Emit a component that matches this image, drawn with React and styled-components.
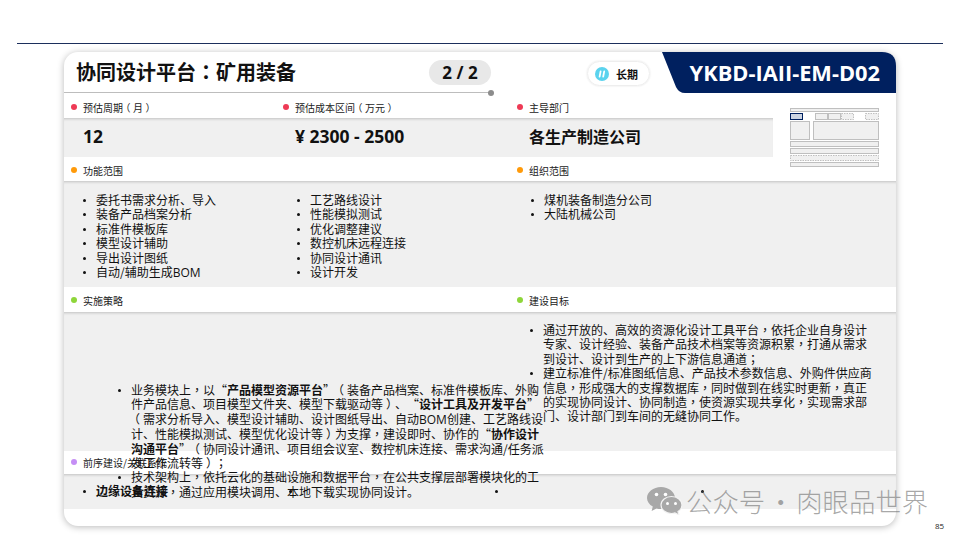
import React from 'react';
import styled, { createGlobalStyle } from 'styled-components';

const GlobalStyle = createGlobalStyle`
    html, body {
        margin: 0;
        background: #fff;
    }
    body {
        width: 960px;
        height: 540px;
        overflow: hidden;
        font-family: "Noto Sans CJK SC", sans-serif;
        text-spacing-trim: space-all;
        color: #111;
    }
`;

const cjk = '"Noto Sans CJK SC", sans-serif';
const latin = '"Open Sans", "Noto Sans CJK SC", sans-serif';

const Page = styled.div`
    position: relative;
    width: 960px;
    height: 540px;
    padding-top: 43px;
    box-sizing: border-box;
`;

const Rule = styled.div`
    height: 1px;
    margin: 0 17px;
    background: #1c2f5c;
`;

const Card = styled.div`
    width: 832px;
    height: 474px;
    margin: 8px 0 0 64px;
    background: #fff;
    border-radius: 14px;
    box-shadow: 0 1px 7px rgba(0, 0, 0, .28);
`;

const Header = styled.div`
    display: flex;
    align-items: flex-start;
    height: 41px;
`;

const TitleBar = styled.div`
    position: relative;
    display: flex;
    align-items: center;
    justify-content: space-between;
    width: 427px;
    height: 41px;
    padding-left: 12px;
    box-sizing: border-box;
    border-bottom: 1px solid #bdbdbd;
    &::after {
        content: "";
        position: absolute;
        right: -3px;
        bottom: -3.5px;
        width: 6px;
        height: 6px;
        border-radius: 50%;
        background: #8c8c8c;
    }
`;

const Title = styled.h1`
    margin: 0;
    font-family: ${cjk};
    font-size: 20px;
    font-weight: 700;
    line-height: 40px;
    color: #111;
`;

const PagePill = styled.div`
    width: 62px;
    height: 25px;
    border-radius: 13px;
    background: #e8e8e8;
    font-family: ${latin};
    font-size: 17px;
    font-weight: 700;
    line-height: 25px;
    text-align: center;
`;

const TermBadge = styled.div`
    display: flex;
    align-items: center;
    gap: 7px;
    width: 63px;
    height: 25px;
    margin: 9px 0 0 96px;
    padding-left: 7px;
    box-sizing: border-box;
    border: 1px solid #eee;
    border-radius: 13px;
    box-shadow: 0 0 2px rgba(0, 0, 0, .12);
    font-size: 11px;
    font-weight: 700;
`;

const CodeTag = styled.div`
    width: 234px;
    height: 41px;
    margin-left: auto;
    padding-right: 16px;
    box-sizing: border-box;
    background: #00205f;
    clip-path: path("M0 0 H220 Q234 0 234 14 V41 H23 Q17 41 14 35 Z");
    color: #fff;
    font-family: ${latin};
    font-size: 21.8px;
    font-weight: 700;
    line-height: 41px;
    text-align: right;
    white-space: nowrap;
`;

const TopBlock = styled.div`
    display: flex;
    height: 64px;
`;

const TopFields = styled.div`
    width: 709px;
`;

const Thumb = styled.svg`
    display: block;
    flex: none;
    width: 90px;
    height: 60px;
    margin: 15px 0 0 17px;
`;

const LabelRow = styled.div`
    display: grid;
    grid-template-columns: ${p => p.$cols || '212px 234px 1fr'};
    height: ${p => p.$h}px;
    padding-top: ${p => p.$pad}px;
    box-sizing: border-box;
    align-items: center;
`;

const Label = styled.div`
    display: flex;
    align-items: center;
    gap: 6px;
    padding-left: 7px;
    font-size: 10px;
    line-height: 14px;
    color: #222;
    white-space: nowrap;
    &::before {
        content: "";
        flex: none;
        width: 6px;
        height: 6px;
        margin-top: -2px;
        border-radius: 50%;
        background: ${p => p.$dot};
    }
`;

const ValueRow = styled.div`
    display: grid;
    grid-template-columns: 212px 234px 1fr;
    align-items: center;
    height: 39px;
    padding-bottom: 3px;
    box-sizing: border-box;
    background: #f0f0f0;
    box-shadow: inset 0 3px 3px -2px rgba(0, 0, 0, .2);
`;

const Value = styled.div`
    padding-left: 19px;
    font-family: ${p => p.$cn ? cjk : latin};
    font-size: ${p => p.$cn ? 16 : 17.5}px;
    font-weight: 700;
`;

const GrayBlock = styled.div`
    display: grid;
    grid-template-columns: ${p => p.$cols};
    height: ${p => p.$h}px;
    background: #f0f0f0;
    box-shadow: inset 0 3px 3px -2px rgba(0, 0, 0, .2);
`;

const List = styled.ul`
    width: ${p => p.$w ? `${p.$w}px` : 'auto'};
    margin: ${p => p.$top}px 0 0 ${p => p.$left}px;
    padding: 0;
    list-style: none;
    font-size: 12px;
    line-height: 14.4px;
    color: #111;
`;

const Item = styled.li`
    position: relative;
    &::before {
        content: "";
        position: absolute;
        left: -13px;
        top: 6px;
        width: 3px;
        height: 3px;
        border-radius: 50%;
        background: #111;
    }
`;

const Latin = styled.span`
    font-family: ${latin};
`;

// the reference centres these marks in their cell, as the TC cut does
const Mark = styled.span`
    font-family: "Noto Sans CJK TC", sans-serif;
`;

// full width brackets sit mid cell in the reference
const Bracket = styled.span`
    display: inline-block;
    transform: translateX(${p => p.$open ? '-.25em' : '.25em'});
`;

const Watermark = styled.div`
    position: absolute;
    left: 647px;
    top: 486px;
    display: flex;
    align-items: center;
    gap: 4px;
    color: rgba(110, 110, 110, .6);
    font-size: 26.4px;
    font-weight: 300;
    line-height: 30px;
    word-spacing: -3.5px;
    white-space: nowrap;
`;

const PageNo = styled.div`
    position: absolute;
    left: 935px;
    top: 520px;
    font-family: ${latin};
    font-size: 8px;
    line-height: 12px;
    color: #222;
`;

const zh = text => text.split(/([，：；（）])/).map((part, i) => {
    if (i % 2 === 0) return part;
    if (part === '（' || part === '）') return <Bracket key={i} $open={part === '（'}>{part}</Bracket>;
    return <Mark key={i}>{part}</Mark>;
});

const features = [
    ['委托书需求分析、导入', '装备产品档案分析', '标准件模板库', '模型设计辅助', '导出设计图纸', <>自动/辅助生成<Latin>BOM</Latin></>],
    ['工艺路线设计', '性能模拟测试', '优化调整建议', '数控机床远程连接', '协同设计通讯', '设计开发'],
    ['煤机装备制造分公司', '大陆机械公司'],
];

const ThumbDrawing = () => (
    <Thumb viewBox="0 0 90 60">
        <g fill="#f0f0f0" stroke="#bfbfbf" strokeWidth="1">
            <rect x="0.5" y="0.5" width="88" height="3" />
            <rect x="25.5" y="5.5" width="12" height="6" />
            <rect x="38.5" y="5.5" width="12" height="6" />
            <rect x="0.5" y="13.5" width="19" height="18" />
            <rect x="23.5" y="13.5" width="65" height="18" />
            <rect x="0.5" y="33.5" width="88" height="5" />
            <rect x="0.5" y="40.5" width="88" height="5" />
            <rect x="0.5" y="54.5" width="88" height="4" />
            <g strokeDasharray="1.5 1">
                <rect x="51.5" y="5.5" width="12" height="6" />
                <rect x="75.5" y="5.5" width="13" height="6" />
                <rect x="0.5" y="47.5" width="88" height="5" />
            </g>
        </g>
        <rect x="0.5" y="5.5" width="12" height="6" fill="#ccd4e2" stroke="#00205f" />
    </Thumb>
);

const TermIcon = () => (
    <svg width="14" height="14" viewBox="0 0 14 14">
        <circle cx="7" cy="7" r="7" fill="#5bd3ee" />
        <path d="M5.6 4.4 L4.6 9.6 M9.2 4.4 L8.2 9.6" stroke="#fff" strokeWidth="1.8" strokeLinecap="round" />
    </svg>
);

const WechatIcon = () => (
    <svg width="35" height="28" viewBox="0 0 35 28">
        <path d="M14 0 C21.7 0 28 5 28 11 C28 17 21.7 22 14 22 C12.4 22 10.9 21.8 9.5 21.4 L4.6 24 L5.8 19.6 C2.2 17.6 0 14.5 0 11 C0 5 6.3 0 14 0 Z" fill="#a8a8a8" />
        <circle cx="9.5" cy="7.5" r="1.8" fill="#fff" />
        <circle cx="18.5" cy="7.5" r="1.8" fill="#fff" />
        <path d="M24.5 9.5 C30.3 9.5 35 13.3 35 18 C35 20.7 33.4 23 31 24.6 L32 28 L28 25.9 C26.9 26.3 25.7 26.5 24.5 26.5 C18.7 26.5 14 22.7 14 18 C14 13.3 18.7 9.5 24.5 9.5 Z" fill="#a8a8a8" stroke="#f4f4f4" strokeWidth="1.2" />
        <circle cx="20.5" cy="16.5" r="1.5" fill="#fff" />
        <circle cx="28.5" cy="16.5" r="1.5" fill="#fff" />
    </svg>
);

const App = () => (
    <Page>
        <GlobalStyle />
        <Rule />
        <Card>
            <Header>
                <TitleBar>
                    <Title>{zh('协同设计平台：矿用装备')}</Title>
                    <PagePill>2 / 2</PagePill>
                </TitleBar>
                <TermBadge><TermIcon />长期</TermBadge>
                <CodeTag>YKBD-IAII-EM-D02</CodeTag>
            </Header>

            <TopBlock>
                <TopFields>
                    <LabelRow $h={25} $pad={4}>
                        <Label $dot="#ee3a55"><span>{zh('预估周期（月）')}</span></Label>
                        <Label $dot="#ee3a55"><span>{zh('预估成本区间（万元）')}</span></Label>
                        <Label $dot="#ee3a55">主导部门</Label>
                    </LabelRow>
                    <ValueRow>
                        <Value>12</Value>
                        <Value>¥ 2300 - 2500</Value>
                        <Value $cn>各生产制造公司</Value>
                    </ValueRow>
                </TopFields>
                <ThumbDrawing />
            </TopBlock>

            <LabelRow $h={24} $pad={4} $cols="446px 1fr">
                <Label $dot="#ff9a0a">功能范围</Label>
                <Label $dot="#ff9a0a">组织范围</Label>
            </LabelRow>
            <GrayBlock $h={106} $cols="212px 234px 1fr">
                {features.map((col, i) => (
                    <List key={i} $top={12} $left={i === 0 ? 32 : 34}>
                        {col.map((text, j) => <Item key={j}>{text}</Item>)}
                    </List>
                ))}
            </GrayBlock>

            <LabelRow $h={25} $pad={2} $cols="446px 1fr">
                <Label $dot="#8ed63a">实施策略</Label>
                <Label $dot="#8ed63a">建设目标</Label>
            </LabelRow>
            <GrayBlock $h={139} $cols="446px 1fr">
                <List $w={430} $top={71} $left={67}>
                    <Item>
                        {zh('业务模块上，以“')}<b>产品模型资源平台</b>{zh('”（装备产品档案、标准件模板库、外购')}<br />
                        {zh('件产品信息、项目模型文件夹、模型下载驱动等）、“')}<b>设计工具及开发平台</b>”<br />
                        {zh('（需求分析导入、模型设计辅助、设计图纸导出、自动')}<Latin>BOM</Latin>创建、工艺路线设<br />
                        {zh('计、性能模拟测试、模型优化设计等）为支撑，建设即时、协作的“')}<b>协作设计</b><br />
                        <b>沟通平台</b>{zh('”（协同设计通讯、项目组会议室、数控机床连接、需求沟通/任务派')}<br />
                        {zh('发工作流转等）；')}
                    </Item>
                    <Item>
                        {zh('技术架构上，依托云化的基础设施和数据平台，在公共支撑层部署模块化的工')}<br />
                        {zh('具资源，通过应用模块调用、本地下载实现协同设计。')}
                    </Item>
                </List>
                <List $w={332} $top={11} $left={33}>
                    <Item>{zh('通过开放的、高效的资源化设计工具平台，依托企业自身设计专家、设计经验、装备产品技术档案等资源积累，打通从需求到设计、设计到生产的上下游信息通道；')}</Item>
                    <Item>{zh('建立标准件/标准图纸信息、产品技术参数信息、外购件供应商信息，形成强大的支撑数据库，同时做到在线实时更新，真正的实现协同设计、协同制造，使资源实现共享化，实现需求部门、设计部门到车间的无缝协同工作。')}</Item>
                </List>
            </GrayBlock>

            <LabelRow $h={23} $pad={1}>
                <Label $dot="#c58ef5">前序建设/关联系统</Label>
            </LabelRow>
            <GrayBlock $h={35} $cols="repeat(4, 206px)">
                <List $top={10} $left={32}><Item><b>边缘设备连接</b></Item></List>
                <List $top={10} $left={32}><Item>&nbsp;</Item></List>
                <List $top={10} $left={32}><Item>&nbsp;</Item></List>
                <List $top={10} $left={32}><Item>&nbsp;</Item></List>
            </GrayBlock>
        </Card>
        <Watermark><WechatIcon />公众号 · 肉眼品世界</Watermark>
        <PageNo>85</PageNo>
    </Page>
);

export default App;
